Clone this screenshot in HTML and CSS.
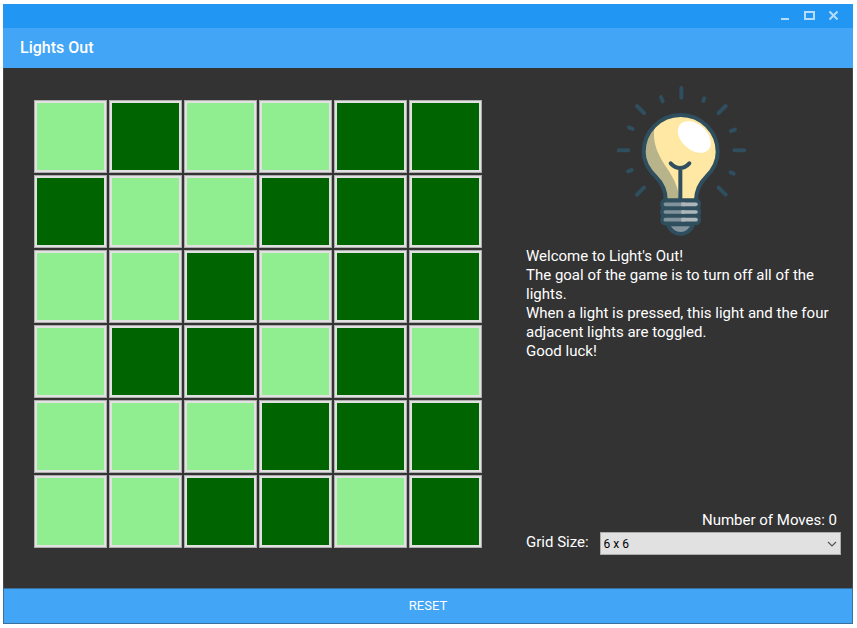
FILE: index.html
```html
<!DOCTYPE html>
<html lang="en">
<head>
<meta charset="utf-8">
<title>Lights Out</title>
<link rel="stylesheet" href="styles.css">
</head>
<body>
<div class="window">
  <div class="titlebar">
    <button class="winbtn" type="button" aria-label="Minimize"><svg width="12" height="12" viewBox="0 0 12 12" shape-rendering="crispEdges"><path d="M2 8h8v2H2z" fill="currentColor"/></svg></button>
    <button class="winbtn" type="button" aria-label="Maximize"><svg width="12" height="12" viewBox="0 0 12 12" shape-rendering="crispEdges"><path d="M1 1h11v9H1zM3 3v5h7V3z" fill="currentColor" fill-rule="evenodd"/></svg></button>
    <button class="winbtn" type="button" aria-label="Close"><svg width="12" height="12" viewBox="0 0 12 12"><path d="M2.500 1.500l8 8M10.500 1.500l-8 8" stroke="currentColor" stroke-width="2.100"/></svg></button>
  </div>
  <header class="appbar"><h1>Lights Out</h1></header>
  <main class="content">
    <div class="board" role="group" aria-label="Lights">
      <button class="light on" type="button" aria-label="Row 1, column 1"></button>
      <button class="light" type="button" aria-label="Row 1, column 2"></button>
      <button class="light on" type="button" aria-label="Row 1, column 3"></button>
      <button class="light on" type="button" aria-label="Row 1, column 4"></button>
      <button class="light" type="button" aria-label="Row 1, column 5"></button>
      <button class="light" type="button" aria-label="Row 1, column 6"></button>
      <button class="light" type="button" aria-label="Row 2, column 1"></button>
      <button class="light on" type="button" aria-label="Row 2, column 2"></button>
      <button class="light on" type="button" aria-label="Row 2, column 3"></button>
      <button class="light" type="button" aria-label="Row 2, column 4"></button>
      <button class="light" type="button" aria-label="Row 2, column 5"></button>
      <button class="light" type="button" aria-label="Row 2, column 6"></button>
      <button class="light on" type="button" aria-label="Row 3, column 1"></button>
      <button class="light on" type="button" aria-label="Row 3, column 2"></button>
      <button class="light" type="button" aria-label="Row 3, column 3"></button>
      <button class="light on" type="button" aria-label="Row 3, column 4"></button>
      <button class="light" type="button" aria-label="Row 3, column 5"></button>
      <button class="light" type="button" aria-label="Row 3, column 6"></button>
      <button class="light on" type="button" aria-label="Row 4, column 1"></button>
      <button class="light" type="button" aria-label="Row 4, column 2"></button>
      <button class="light" type="button" aria-label="Row 4, column 3"></button>
      <button class="light on" type="button" aria-label="Row 4, column 4"></button>
      <button class="light" type="button" aria-label="Row 4, column 5"></button>
      <button class="light on" type="button" aria-label="Row 4, column 6"></button>
      <button class="light on" type="button" aria-label="Row 5, column 1"></button>
      <button class="light on" type="button" aria-label="Row 5, column 2"></button>
      <button class="light on" type="button" aria-label="Row 5, column 3"></button>
      <button class="light" type="button" aria-label="Row 5, column 4"></button>
      <button class="light" type="button" aria-label="Row 5, column 5"></button>
      <button class="light" type="button" aria-label="Row 5, column 6"></button>
      <button class="light on" type="button" aria-label="Row 6, column 1"></button>
      <button class="light on" type="button" aria-label="Row 6, column 2"></button>
      <button class="light" type="button" aria-label="Row 6, column 3"></button>
      <button class="light" type="button" aria-label="Row 6, column 4"></button>
      <button class="light on" type="button" aria-label="Row 6, column 5"></button>
      <button class="light" type="button" aria-label="Row 6, column 6"></button>
    </div>
    <section class="panel">
      <div class="info">
        <svg class="bulb" width="130" height="152" viewBox="50 30 390 456" aria-hidden="true">
          <g stroke="#2f4e5e" stroke-width="12" stroke-linecap="round" fill="none">
            <path d="M243 39v29M110 93l21 21M376 93l-21 21M55 226h29M402 226h29M110 359l21-21M376 359l-21-21"/>
            <path d="M182 66l5 13M312 70l-3 8M86 157l11 5M392 168l12-4M83 289l11-4M391 292l9 4"/>
          </g>
          <path d="M196 374C196 345 186 325 166 305C143 283 130 258 130 231A111 111 0 0 1 352 231C352 258 340 283 318 305C298 325 288 345 287 374Z" fill="#fee8a3"/>
          <path d="M162 157C156 205 172 238 198 277C216 304 232 328 238 374H196C196 345 186 325 166 305C143 283 130 258 130 231C130 201 142 175 162 157Z" fill="#b7b38b"/>
          <ellipse cx="282" cy="186" rx="57" ry="38" transform="rotate(42 282 186)" fill="#fff"/>
          <path d="M196 374C196 345 186 325 166 305C143 283 130 258 130 231A111 111 0 0 1 352 231C352 258 340 283 318 305C298 325 288 345 287 374" fill="none" stroke="#2f4e5e" stroke-width="12"/>
          <path d="M240 374V280M211 265C228 284 250 284 267 265" fill="none" stroke="#2f4e5e" stroke-width="12" stroke-linecap="round"/>
          <path d="M202 448C210 467 224 477 241 477S271 467 279 448Z" fill="#82939b" stroke="#2f4e5e" stroke-width="12" stroke-linejoin="round"/>
          <path d="M196 370H286C300 370 307 387 299 399C304 406 304 415 299 422C307 435 300 451 286 451H196C182 451 175 435 183 422C178 415 178 406 183 399C175 387 182 370 196 370Z" fill="#2f4e5e"/>
          <path d="M195 388H244M195 411H244M195 434H244" stroke="#82939b" stroke-width="11" stroke-linecap="round"/>
          <path d="M249 388H287M249 411H287M249 434H287" stroke="#afb6bb" stroke-width="11" stroke-linecap="round"/>
          <path d="M243 382.500h10v11h-10zM243 405.500h10v11h-10zM243 428.500h10v11h-10z" fill="#afb6bb"/>
        </svg>
        <p class="intro">Welcome to Light's Out!<br>The goal of the game is to turn off all of the lights.<br>When a light is pressed, this light and the four adjacent lights are toggled.<br>Good luck!</p>
        <p class="moves">Number of Moves: 0</p>
      </div>
      <div class="size-row">
        <label for="grid-size">Grid Size:</label>
        <div class="select-box">
          <select id="grid-size"><option selected>6 x 6</option></select>
          <svg class="chevron" width="10" height="6" viewBox="0 0 10 6" aria-hidden="true"><path d="M1 1l4 4 4-4" fill="none" stroke="#555" stroke-width="1.200"/></svg>
        </div>
      </div>
    </section>
  </main>
  <button class="reset" type="button">RESET</button>
</div>
</body>
</html>
```
FILE: styles.css
```css
* {
  box-sizing: border-box;
}

body {
  margin: 0;
  padding: 4px 4px 4px 3px;
  background: #fff;
  color: #fff;
  font-family: Roboto, sans-serif;
  font-size: 15px;
  line-height: 19px;
}

.window {
  display: flex;
  flex-direction: column;
  min-height: calc(100vh - 8px);
  background: #333;
}

.titlebar {
  display: flex;
  justify-content: flex-end;
  align-items: center;
  height: 24px;
  padding-right: 8px;
  background: #2196f3;
}

.winbtn {
  display: flex;
  align-items: center;
  justify-content: center;
  width: 24px;
  height: 24px;
  padding: 0;
  border: 0;
  background: none;
  color: #b5dcfb;
}

.appbar {
  display: flex;
  align-items: center;
  height: 40px;
  padding: 0 17px 2px;
  background: #42a5f5;
}

.appbar h1 {
  margin: 0;
  font-size: 16px;
  font-weight: 500;
}

.content {
  flex: 1;
  display: grid;
  grid-template-columns: 448fr 315fr;
  gap: 44px;
  padding: 17px 11px 33px 30px;
  border: solid #484848;
  border-width: 0 1px;
}

.board {
  display: grid;
  grid-template-columns: repeat(6, 1fr);
  gap: 2px;
  align-self: start;
  margin-top: 15px;
}

.light {
  aspect-ratio: 1;
  padding: 2px;
  border: 1px solid #adadad;
  background: #006400 content-box;
  box-shadow: inset 0 0 0 2px #e1e1e1;
}

.light.on {
  background-color: #90ee90;
}

.panel {
  display: flex;
  flex-direction: column;
  gap: 2px;
}

.info {
  flex: 1;
  display: flex;
  flex-direction: column;
  padding-right: 4px;
}

.bulb {
  align-self: center;
}

.intro {
  margin: 10px 0 0;
}

.moves {
  margin: auto 0 0;
  text-align: right;
}

.size-row {
  display: flex;
  gap: 11px;
}

.size-row label {
  padding-top: 1px;
}

.select-box {
  position: relative;
  flex: 1;
}

.select-box select {
  appearance: none;
  display: block;
  width: 100%;
  height: 23px;
  padding: 0 3px;
  border: 1px solid #adadad;
  border-radius: 0;
  background: #e1e1e1;
  color: #000;
  font: 12px Roboto, sans-serif;
}

.chevron {
  position: absolute;
  top: 9px;
  right: 4px;
  pointer-events: none;
}

.reset {
  height: 36px;
  padding: 0 0 2px;
  border: 1px solid #3b6f9c;
  background: #42a5f5;
  color: #fff;
  font: 13px Roboto, sans-serif;
}
```
